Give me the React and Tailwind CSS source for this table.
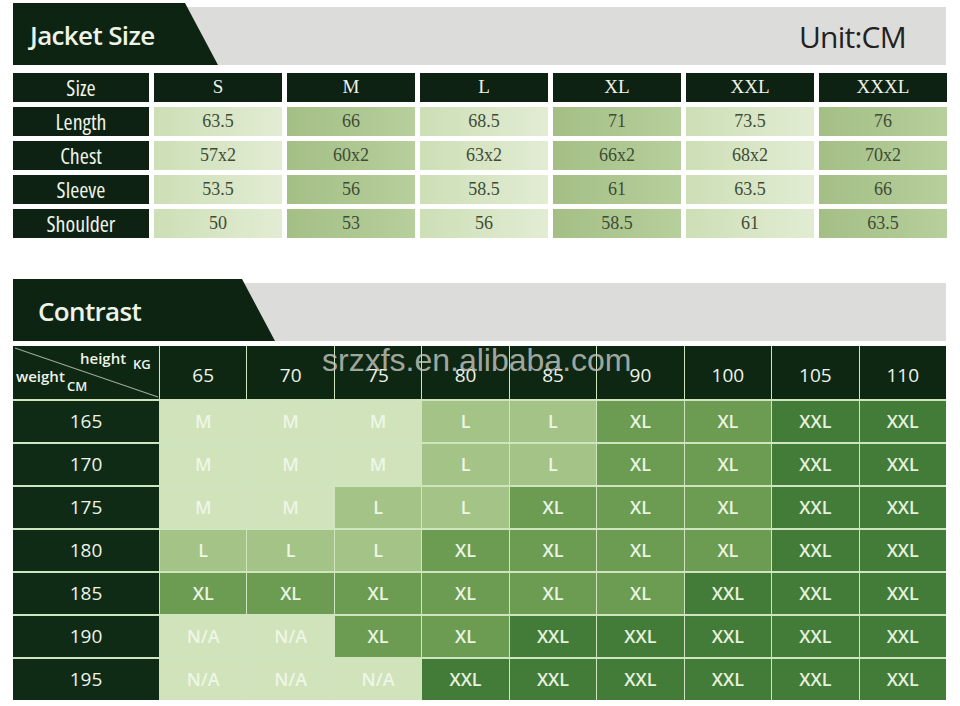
import React from 'react';

const sizeCols = ['S', 'M', 'L', 'XL', 'XXL', 'XXXL'];
const measures = [
  ['Length', ['63.5', '66', '68.5', '71', '73.5', '76']],
  ['Chest', ['57x2', '60x2', '63x2', '66x2', '68x2', '70x2']],
  ['Sleeve', ['53.5', '56', '58.5', '61', '63.5', '66']],
  ['Shoulder', ['50', '53', '56', '58.5', '61', '63.5']],
];

const weights = ['65', '70', '75', '80', '85', '90', '100', '105', '110'];
const chart = [
  ['165', ['M', 'M', 'M', 'L', 'L', 'XL', 'XL', 'XXL', 'XXL']],
  ['170', ['M', 'M', 'M', 'L', 'L', 'XL', 'XL', 'XXL', 'XXL']],
  ['175', ['M', 'M', 'L', 'L', 'XL', 'XL', 'XL', 'XXL', 'XXL']],
  ['180', ['L', 'L', 'L', 'XL', 'XL', 'XL', 'XL', 'XXL', 'XXL']],
  ['185', ['XL', 'XL', 'XL', 'XL', 'XL', 'XL', 'XXL', 'XXL', 'XXL']],
  ['190', ['N/A', 'N/A', 'XL', 'XL', 'XXL', 'XXL', 'XXL', 'XXL', 'XXL']],
  ['195', ['N/A', 'N/A', 'N/A', 'XXL', 'XXL', 'XXL', 'XXL', 'XXL', 'XXL']],
];

const cellTone = {
  M: 'bg-[#d0e3ba] text-[#eef6e6]',
  'N/A': 'bg-[#d0e3ba] text-[#eef6e6]',
  L: 'bg-[#a3c486] text-[#eef6e6]',
  XL: 'bg-[#6c9c52] text-[#eaf4e2]',
  XXL: 'bg-[#437c39] text-[#e6f1de]',
};

const sans = "font-['Open_Sans','Liberation_Sans',sans-serif]";
const serif = "font-['Liberation_Serif','Times_New_Roman',serif]";

const SectionHeader = ({ title, tabWidth, pad, right }) => (
  <div className="flex items-end h-[62px]">
    <div
      className={`relative z-10 h-[62px] shrink-0 bg-[#0d2413] flex items-center pt-[2px] ${tabWidth} ${pad}`}
      style={{ clipPath: 'polygon(0 0, calc(100% - 33px) 0, 100% 100%, 0 100%)' }}
    >
      <span className={`${sans} text-[26px] font-semibold text-[#eef3e8] tracking-tight`}>{title}</span>
    </div>
    <div className="-ml-[40px] flex-1 h-[58px] bg-[#dcdddb] flex items-center justify-end pr-[40px]">
      {right && <span className={`${sans} text-[30px] text-[#222] tracking-tight`}>{right}</span>}
    </div>
  </div>
);

const label = `${sans} text-[22px] font-stretch-semi-condensed text-[#eef3e8]`;

export default function App() {
  return (
    <div className="w-[960px] h-[706px] bg-white overflow-hidden pl-[13px] pr-[14px] pt-[3px]">
      <SectionHeader title="Jacket Size" tabWidth="w-[205px]" pad="pl-[17px]" right="Unit:CM" />

      <div className="mt-[8px] grid grid-cols-[136px_repeat(6,128px)] gap-[5px]">
        <div className={`h-[29px] bg-[#0d2212] flex items-center justify-center ${label}`}>Size</div>
        {sizeCols.map((s) => (
          <div key={s} className={`h-[29px] bg-[#0d2212] flex items-center justify-center ${serif} text-[19px] text-[#eef3e8]`}>{s}</div>
        ))}
        {measures.map(([name, vals]) => (
          <React.Fragment key={name}>
            <div className={`h-[29px] bg-[#0d2212] flex items-center justify-center ${label}`}>{name}</div>
            {vals.map((v, i) => (
              <div
                key={i}
                className={`h-[29px] flex items-center justify-center ${serif} text-[18px] text-[#3e4c36] ${
                  i % 2 === 0 ? 'bg-gradient-to-r from-[#cddfb6] to-[#e2ecd3]' : 'bg-gradient-to-r from-[#a4bf86] to-[#b7cf9c]'
                }`}
              >
                {v}
              </div>
            ))}
          </React.Fragment>
        ))}
      </div>

      <div className="mt-[41px]">
        <SectionHeader title="Contrast" tabWidth="w-[262px]" pad="pl-[25px]" />
      </div>

      <div className="relative mt-[5px] grid grid-cols-[146px_repeat(9,1fr)] gap-x-[1px] gap-y-[2px] bg-[#cfe5bf] w-[933px]">
        <div className="relative h-[53px] bg-[#0e2713] overflow-hidden">
          <svg className="absolute inset-0" width="146" height="53" viewBox="0 0 146 53">
            <line x1="2" y1="2" x2="145" y2="51" stroke="#9aa89a" strokeWidth="1.2" />
          </svg>
          <span className={`absolute left-[67px] top-[1px] ${sans} text-[15px] font-semibold text-[#eef3e8]`}>height</span>
          <span className={`absolute left-[120px] top-[9px] ${sans} text-[13px] font-semibold text-[#eef3e8]`}>KG</span>
          <span className={`absolute left-[3px] top-[19px] ${sans} text-[15px] font-semibold text-[#eef3e8]`}>weight</span>
          <span className={`absolute left-[54px] top-[31px] ${sans} text-[13px] font-semibold text-[#eef3e8]`}>CM</span>
        </div>
        {weights.map((w) => (
          <div key={w} className={`h-[53px] bg-[#0e2713] flex items-center justify-center pt-[6px] ${sans} text-[19px] text-[#eef3e8]`}>{w}</div>
        ))}
        {chart.map(([h, vals]) => (
          <React.Fragment key={h}>
            <div className={`h-[41px] bg-[#0f2b15] flex items-center justify-center ${sans} text-[19px] text-[#eef3e8]`}>{h}</div>
            {vals.map((v, i) => (
              <div key={i} className={`h-[41px] flex items-center justify-center ${sans} text-[18px] font-semibold ${cellTone[v]}`}>{v}</div>
            ))}
          </React.Fragment>
        ))}
        <div className="absolute left-[309px] top-[-10px] font-['Liberation_Sans',Arial,sans-serif] text-[32px] text-[#c8cac6]/80 pointer-events-none">
          srzxfs.en.alibaba.com
        </div>
      </div>
    </div>
  );
}
